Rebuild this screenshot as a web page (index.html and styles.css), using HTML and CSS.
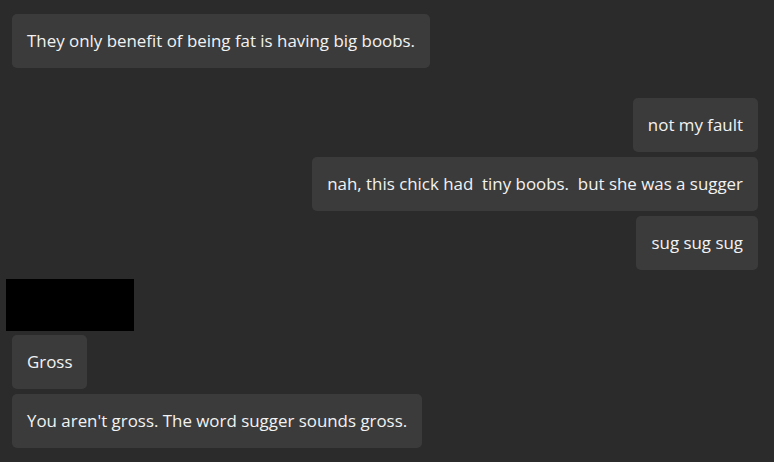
FILE: index.html
```html
<!DOCTYPE html>
<html lang="en">
<head>
<meta charset="UTF-8" />
<title>Chat</title>
<link rel="stylesheet" href="styles.css">
</head>
<body>
  <div class="chat">
    <div class="group incoming first">
      <div class="bubble">They only benefit of being fat is having big boobs.</div>
    </div>

    <div class="group outgoing">
      <div class="bubble">not my fault</div>
      <div class="bubble">nah, this chick had&nbsp; tiny boobs.&nbsp; but she was a sugger</div>
      <div class="bubble">sug sug sug</div>
    </div>

    <div class="redacted"></div>

    <div class="group incoming">
      <div class="bubble">Gross</div>
      <div class="bubble">You aren't gross. The word sugger sounds gross.</div>
    </div>
  </div>
</body>
</html>
```

FILE: styles.css
```css
body {
  margin: 0;
  background-color: #2b2b2b;
  font-family: "Segoe UI", "Open Sans", sans-serif;
  font-size: 16.9px;
  color: #f2f2f2;
}

.chat {
  display: flex;
  flex-direction: column;
  padding: 14px 16px 0 12px;
}

.group {
  display: flex;
  flex-direction: column;
  gap: 5px;
}

.incoming {
  align-items: flex-start;
}

.outgoing {
  align-items: flex-end;
  margin-top: 30px;
}

.bubble {
  background-color: #3b3b3b;
  border-radius: 5px;
  padding: 16px 15px;
  line-height: 22px;
  white-space: nowrap;
}

.redacted {
  width: 128px;
  height: 52px;
  background: #000;
  margin: 9px 0 4px -6px;
}
```
